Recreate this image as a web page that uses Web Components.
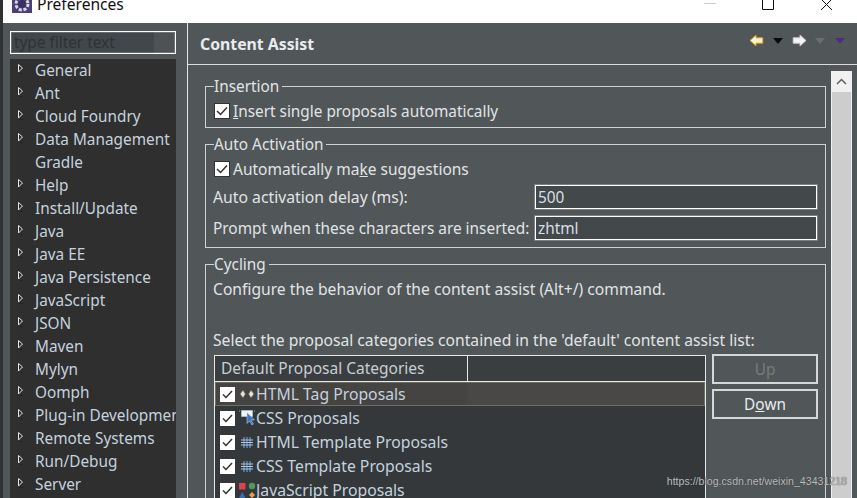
<!DOCTYPE html>
<html>
<head>
<meta charset="utf-8">
<title>Preferences</title>
<style>
  html, body { margin: 0; height: 100%; overflow: hidden; background: #2f3133; }
  body { font-family: "Noto Sans", "Open Sans", sans-serif; font-size: 15.35px; color: #d7dfe6; }
</style>
</head>
<body>
<pref-window></pref-window>

<script>
const ICONS = {
  tag: `<svg width="18" height="18" viewBox="0 0 18 18"><path d="M5 5 2 9l3 4 2.500-4zM13 5l3 4-3 4-2.500-4z" fill="#e4e4d8" stroke="#5a5a50" stroke-width=".7"/></svg>`,
  css: `<svg width="18" height="18" viewBox="0 0 18 18"><path d="M3.500 1.500h11v6h-11z" fill="#f4f4ee" stroke="#9fb9cc"/><path d="M1 2h1M16 2h1" stroke="#7fb0d8"/><path d="M9 3.500v11l2.500-2.500 2.500 4 1.500-1-2.500-4h3.500z" fill="#3a78c0" stroke="#cfe0ee" stroke-width=".5"/></svg>`,
  tpl: `<svg width="18" height="18" viewBox="0 0 18 18"><path d="M6 4v11M9 4v11M12 4v11" stroke="#6fa0d8" stroke-width="1.100" fill="none"/><path d="M3 7h12M3 9.500h12M3 12h12" stroke="#a9c8e8" stroke-width="1" fill="none"/></svg>`,
  js: `<svg width="18" height="18" viewBox="0 0 18 18"><rect x="1" y="2" width="6.500" height="6.500" fill="#d9434e"/><circle cx="14" cy="5" r="3.200" fill="#4c9a5c"/><path d="M4.300 11 7.500 17H1z" fill="#3a6fb0"/><path d="M14 11l3 3-3 3-3-3z" fill="#e8a33a"/></svg>`
};

class TitleBar extends HTMLElement {
  connectedCallback() {
    this.attachShadow({ mode: 'open' });
    this.shadowRoot.innerHTML = `
      <style>
        :host { display: flex; height: 23px; background: #fff; align-items: flex-start; overflow: hidden; color: #111; }
        .logo { margin: -6px 0 0 9px; width: 20px; height: 19px; background: #4b3f78; display: flex; align-items: center; justify-content: center; }
        .title { margin: -6px 0 0 5px; font-size: 15.6px; line-height: 20px; flex: 1; }
        .btns { display: flex; }
        .btn { width: 59px; height: 23px; position: relative; }
        .min::after { content: ''; position: absolute; left: 24px; top: 3px; width: 12px; height: 1px; background: #ccc; }
      </style>
      <div class="logo">
        <svg width="18" height="18" viewBox="0 0 18 18"><circle cx="9" cy="9" r="6" fill="none" stroke="#d8d8d8" stroke-width="3" stroke-dasharray="3 1.700"/><circle cx="9" cy="9" r="4" fill="#3a2f66"/></svg>
      </div>
      <div class="title">Preferences</div>
      <div class="btns">
        <div class="btn min"></div>
        <svg width="59" height="23"><path d="M23.500 0v9.500h11V0" fill="none" stroke="#111"/></svg>
        <svg width="59" height="23"><path d="M23 -1l11 11M34 -1 23 10" fill="none" stroke="#111"/></svg>
      </div>
    `;
  }
}

class TreeItem extends HTMLElement {
  connectedCallback() {
    const leaf = this.hasAttribute('leaf');
    this.attachShadow({ mode: 'open' });
    this.shadowRoot.innerHTML = `
      <style>
        :host { display: flex; height: 23px; align-items: center; white-space: nowrap; }
        svg { margin: -3px 0 0 7px; flex: none; }
        .sp { flex: none; }
        span { color: #c5d2de; margin-bottom: 2px; }
      </style>
      ${leaf ? '' : '<svg width="11" height="13" viewBox="0 0 11 13"><path d="M1.500 1.500 5.500 5 1.500 9z" fill="none" stroke="#e4e4e4"/><path d="M3 11h2V10z" fill="#111"/></svg>'}
      <div class="sp" style="width:${leaf ? 25 : 7}px"></div>
      <span><slot></slot></span>
    `;
  }
}

class PrefSidebar extends HTMLElement {
  connectedCallback() {
    this.attachShadow({ mode: 'open' });
    this.shadowRoot.innerHTML = `
      <style>
        :host { display: flex; flex-direction: column; box-sizing: border-box; width: 185px; background: #515658; padding: 8px 11px 0 7px; border-right: 1px solid #e6e6e6; overflow: hidden; }
        .filter { box-sizing: border-box; height: 23px; border: 1px solid #fff; box-shadow: inset 0 0 0 1px rgba(255,255,255,.2); background: linear-gradient(to right, #42474b 87%, #4e5254 87%); color: #2e3236; line-height: 21px; padding-left: 3px; margin-bottom: 5px; }
        .tree { flex: 1; background: #2f2f2f; overflow: hidden; }
      </style>
      <div class="filter">type filter text</div>
      <div class="tree"><slot></slot></div>
    `;
  }
}

class PrefGroup extends HTMLElement {
  connectedCallback() {
    this.attachShadow({ mode: 'open' });
    this.shadowRoot.innerHTML = `
      <style>
        :host { display: block; box-sizing: border-box; border: 1px solid #cfd3d5; padding: 0 7px; margin-bottom: 16px; }
        .label { width: fit-content; height: 18px; margin: -9px 0 3px 1px; padding: 0 3px 0 0; line-height: 17px; background: #515658; color: #e0e4e6; }
      </style>
      <div class="label">${this.getAttribute('label')}</div>
      <slot></slot>
    `;
  }
}

class PrefCheck extends HTMLElement {
  connectedCallback() {
    this.attachShadow({ mode: 'open' });
    this.shadowRoot.innerHTML = `
      <style>
        :host { display: flex; align-items: center; height: 24px; margin-left: 1px; gap: 3px; color: #e0e4e6; white-space: nowrap; }
        .box { width: 16px; height: 16px; flex: none; box-sizing: border-box; background: #fff; border: 1px solid #333; }
        svg { display: block; }
      </style>
      <div class="box"><svg width="14" height="14" viewBox="0 0 14 14"><path d="M2 7 5.500 10.500 12 3.500" fill="none" stroke="#333" stroke-width="1.500"/></svg></div>
      <span><slot></slot></span>
    `;
  }
}

class PrefField extends HTMLElement {
  connectedCallback() {
    this.attachShadow({ mode: 'open' });
    this.shadowRoot.innerHTML = `
      <style>
        :host { display: flex; align-items: center; height: 24px; color: #e0e4e6; white-space: nowrap; }
        .label { width: 322px; flex: none; }
        .input { box-sizing: border-box; width: 282px; height: 24px; border: 1px solid #fff; outline: 1px solid #7b7f81; background: #43484b; line-height: 22px; padding-left: 2px; color: #d7dfe6; font-size: 15.35px; }
      </style>
      <div class="label"><slot></slot></div>
      <div class="input">${this.getAttribute('value')}</div>
    `;
  }
}

class PrefButton extends HTMLElement {
  connectedCallback() {
    this.attachShadow({ mode: 'open' });
    this.shadowRoot.innerHTML = `
      <style>
        :host { display: flex; box-sizing: border-box; width: 106px; height: 30px; border: 2px solid #d4d6d7; align-items: center; justify-content: center; background: #515658; color: #e8ecef; }
        :host([disabled]) { color: #777b7d; }
      </style>
      <slot></slot>
    `;
  }
}

class ProposalRow extends HTMLElement {
  connectedCallback() {
    this.attachShadow({ mode: 'open' });
    this.shadowRoot.innerHTML = `
      <style>
        :host { display: flex; align-items: center; height: 24px; box-sizing: border-box; padding-left: 5px; white-space: nowrap; color: #c5d2de; font-size: 15.75px; }
        :host([selected]) { background: linear-gradient(to right, #464443 252px, #4a4846 252px); outline: 1px solid #6e6e60; outline-offset: -1px; }
        .box { width: 15px; height: 15px; background: #fff; flex: none; display: block; }
        .icon { width: 18px; height: 18px; margin: 0 0 0 3px; flex: none; display: flex; align-items: center; justify-content: center; }
      </style>
      <div class="box"><svg width="15" height="15" viewBox="0 0 15 15" style="display:block"><path d="M3 7.500 6 10.500 12 4" fill="none" stroke="#333" stroke-width="1.500"/></svg></div>
      <div class="icon">${ICONS[this.getAttribute('icon')]}</div>
      <span><slot></slot></span>
    `;
  }
}

class ProposalTable extends HTMLElement {
  connectedCallback() {
    this.attachShadow({ mode: 'open' });
    this.shadowRoot.innerHTML = `
      <style>
        :host { display: block; box-sizing: border-box; width: 492px; height: 200px; margin-left: 1px; border: 1px solid #e8e8e8; background: #34383a; overflow: hidden; flex: none; }
        .head { display: flex; height: 25px; border-bottom: 1px solid #e8e8e8; background: #3a3e40; color: #c8ced2; line-height: 25px; font-size: 15.5px; }
        .c1 { width: 253px; padding-left: 6px; box-sizing: border-box; border-right: 1px solid #e8e8e8; }
      </style>
      <div class="head"><div class="c1">Default Proposal Categories</div></div>
      <slot></slot>
    `;
  }
}

class PrefHeader extends HTMLElement {
  connectedCallback() {
    this.attachShadow({ mode: 'open' });
    this.shadowRoot.innerHTML = `
      <style>
        :host { display: flex; align-items: center; height: 41px; flex: none; padding: 0 12px 0 12px; border-bottom: 1px solid #dcdcdc; background: #515658; }
        h1 { flex: 1; margin: 0; font-size: 15.8px; font-weight: 700; color: #e8ecef; }
        .nav { display: flex; align-items: center; gap: 9px; margin-top: -6px; }
      </style>
      <h1><slot></slot></h1>
      <div class="nav">
        <svg width="15" height="13" viewBox="0 0 15 13"><path d="M7 1 1 6.500 7 12V9.200h6.800V3.800H7z" fill="#fff5d0" stroke="#d99a1c"/></svg>
        <svg width="10" height="6" viewBox="0 0 10 6"><path d="M0 0h10L5 6z" fill="#0a0a0a"/></svg>
        <svg width="15" height="13" viewBox="0 0 15 13"><path d="M8 1 14 6.500 8 12V9.200H1.200V3.800H8z" fill="#f4f4f4" stroke="#ccc"/></svg>
        <svg width="10" height="6" viewBox="0 0 10 6" style="margin-left:-1px"><path d="M0 0h10L5 6z" fill="#6a6e70"/></svg>
        <svg width="10" height="6" viewBox="0 0 10 6" style="margin-left:1px"><path d="M0 0h10L5 6z" fill="#4a2d80"/></svg>
      </div>
    `;
  }
}

class PrefScrollbar extends HTMLElement {
  connectedCallback() {
    this.attachShadow({ mode: 'open' });
    this.shadowRoot.innerHTML = `
      <style>
        :host { display: flex; flex-direction: column; width: 21px; flex: none; box-sizing: border-box; margin: 6px 5px 0 5px; background: #f0f0f0; }
        .up { height: 21px; display: flex; align-items: center; justify-content: center; }
        .thumb { flex: 1; background: #cdcdcd; margin: 0 1px; }
      </style>
      <div class="up"><svg width="11" height="7" viewBox="0 0 11 7"><path d="M1 6 5.500 1.500 10 6" fill="none" stroke="#606060" stroke-width="1.500"/></svg></div>
      <div class="thumb"></div>
    `;
  }
}

class PrefContent extends HTMLElement {
  connectedCallback() {
    this.attachShadow({ mode: 'open' });
    this.shadowRoot.innerHTML = `
      <style>
        :host { display: flex; flex-direction: column; flex: 1; min-width: 0; background: #515658; overflow: hidden; }
        .body { flex: 1; display: flex; min-height: 0; }
        .scroll { flex: 1; min-width: 0; padding: 21px 0 0 17px; overflow: hidden; }
      </style>
      <pref-header>Content Assist</pref-header>
      <div class="body">
        <div class="scroll"><slot></slot></div>
        <pref-scrollbar></pref-scrollbar>
      </div>
    `;
  }
}

class PrefWindow extends HTMLElement {
  connectedCallback() {
    this.attachShadow({ mode: 'open' });
    this.shadowRoot.innerHTML = `
      <style>
        :host { display: block; height: 498px; padding-left: 3px; position: relative; overflow: hidden; }
        .main { display: flex; height: 475px; }
        .wm { position: absolute; right: 10px; top: 475px; font: 10.6px "Liberation Sans", sans-serif; color: #b8bcbe; text-shadow: 0 0 1px #333; }
        .line { color: #e0e4e6; line-height: 24px; white-space: nowrap; font-size: 15.65px; }
      </style>
      <title-bar></title-bar>
      <div class="main">
        <pref-sidebar>
          <tree-item>General</tree-item>
          <tree-item>Ant</tree-item>
          <tree-item>Cloud Foundry</tree-item>
          <tree-item>Data Management</tree-item>
          <tree-item leaf>Gradle</tree-item>
          <tree-item>Help</tree-item>
          <tree-item>Install/Update</tree-item>
          <tree-item>Java</tree-item>
          <tree-item>Java EE</tree-item>
          <tree-item>Java Persistence</tree-item>
          <tree-item>JavaScript</tree-item>
          <tree-item>JSON</tree-item>
          <tree-item>Maven</tree-item>
          <tree-item>Mylyn</tree-item>
          <tree-item>Oomph</tree-item>
          <tree-item>Plug-in Development</tree-item>
          <tree-item>Remote Systems</tree-item>
          <tree-item>Run/Debug</tree-item>
          <tree-item>Server</tree-item>
        </pref-sidebar>
        <pref-content>
          <pref-group label="Insertion" style="height:42px">
            <pref-check><u>I</u>nsert single proposals automatically</pref-check>
          </pref-group>
          <pref-group label="Auto Activation" style="height:104px">
            <pref-check style="font-size:15.5px">Automatically ma<u>k</u>e suggestions</pref-check>
            <pref-field value="500" style="margin-top:4px;font-size:15.75px">Auto activation delay (ms):</pref-field>
            <pref-field value="zhtml" style="margin-top:7px;font-size:15.4px">Prompt when these characters are inserted:</pref-field>
          </pref-group>
          <pref-group label="Cycling" style="height:300px">
            <div class="line">Configure the behavior of the content assist (Alt+/) command.</div>
            <div class="line" style="margin-top:27px">Select the proposal categories contained in the 'default' content assist list:</div>
            <div style="display:flex;gap:6px;margin-top:3px">
              <proposal-table>
                <proposal-row icon="tag" selected>HTML Tag Proposals</proposal-row>
                <proposal-row icon="css">CSS Proposals</proposal-row>
                <proposal-row icon="tpl">HTML Template Proposals</proposal-row>
                <proposal-row icon="tpl">CSS Template Proposals</proposal-row>
                <proposal-row icon="js">JavaScript Proposals</proposal-row>
              </proposal-table>
              <div style="display:flex;flex-direction:column;gap:5px;margin-top:-1px">
                <pref-button disabled>Up</pref-button>
                <pref-button>D<u>o</u>wn</pref-button>
              </div>
            </div>
          </pref-group>
        </pref-content>
      </div>
      <div class="wm">https://blog.csdn.net/weixin_43431218</div>
    `;
  }
}

customElements.define('title-bar', TitleBar);
customElements.define('tree-item', TreeItem);
customElements.define('pref-sidebar', PrefSidebar);
customElements.define('pref-group', PrefGroup);
customElements.define('pref-check', PrefCheck);
customElements.define('pref-field', PrefField);
customElements.define('pref-button', PrefButton);
customElements.define('proposal-row', ProposalRow);
customElements.define('proposal-table', ProposalTable);
customElements.define('pref-header', PrefHeader);
customElements.define('pref-scrollbar', PrefScrollbar);
customElements.define('pref-content', PrefContent);
customElements.define('pref-window', PrefWindow);
</script>
</body>
</html>
